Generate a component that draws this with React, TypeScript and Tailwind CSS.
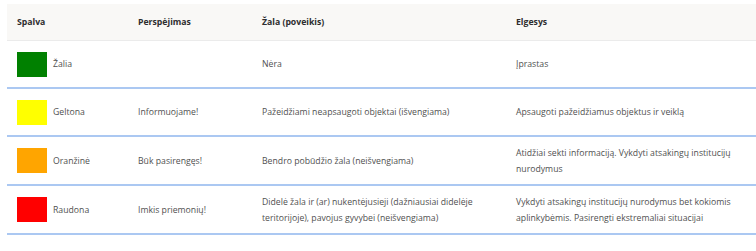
import type { ReactNode } from 'react'

interface Row {
  color: string
  name: string
  warning: string
  impact: ReactNode
  action: ReactNode
  height: string
}

const ROWS: Row[] = [
  { color: 'bg-[#008000]', name: 'Žalia', warning: '', impact: 'Nėra', action: 'Įprastas', height: 'h-[48px]' },
  {
    color: 'bg-[#ffff00]',
    name: 'Geltona',
    warning: 'Informuojame!',
    impact: 'Pažeidžiami neapsaugoti objektai (išvengiama)',
    action: 'Apsaugoti pažeidžiamus objektus ir veiklą',
    height: 'h-[48px]',
  },
  {
    color: 'bg-[#ffa500]',
    name: 'Oranžinė',
    warning: 'Būk pasirengęs!',
    impact: 'Bendro pobūdžio žala (neišvengiama)',
    action: (
      <>
        Atidžiai sekti informaciją. Vykdyti atsakingų institucijų
        <br />
        nurodymus
      </>
    ),
    height: 'h-[49px]',
  },
  {
    color: 'bg-[#ff0000]',
    name: 'Raudona',
    warning: 'Imkis priemonių!',
    impact: (
      <>
        Didelė žala ir (ar) nukentėjusieji (dažniausiai didelėje
        <br />
        teritorijoje), pavojus gyvybei (neišvengiama)
      </>
    ),
    action: (
      <>
        Vykdyti atsakingų institucijų nurodymus bet kokiomis
        <br />
        aplinkybėmis. Pasirengti ekstremaliai situacijai
      </>
    ),
    height: 'h-[49px]',
  },
]

const GRID = 'grid grid-cols-[121px_124px_254px_1fr] items-center'

export default function App() {
  return (
    <div className="h-[251px] w-[756px] overflow-hidden bg-white pl-[7px] pt-[4px] font-['Open_Sans',sans-serif] text-[8.7px] leading-[16px] text-[#505050]">
      <div className={`${GRID} h-[37px] border-b border-[#ebebeb] bg-[#f9f8f6] font-bold text-[#2e2e2e]`}>
        <div className="pl-[10px]">Spalva</div>
        <div className="pl-[10px]">Perspėjimas</div>
        <div className="pl-[10px]">Žala (poveikis)</div>
        <div className="pl-[10px]">Elgesys</div>
      </div>
      {ROWS.map((r) => (
        <div key={r.name} className={`${GRID} ${r.height} border-b-2 border-[#abc8f2]`}>
          <div className="flex items-center gap-[6px] pl-[10px]">
            <span className={`inline-block h-[25px] w-[30px] ${r.color}`} />
            <span>{r.name}</span>
          </div>
          <div className="pl-[10px]">{r.warning}</div>
          <div className="pl-[10px]">{r.impact}</div>
          <div className="whitespace-nowrap pl-[10px]">{r.action}</div>
        </div>
      ))}
    </div>
  )
}
